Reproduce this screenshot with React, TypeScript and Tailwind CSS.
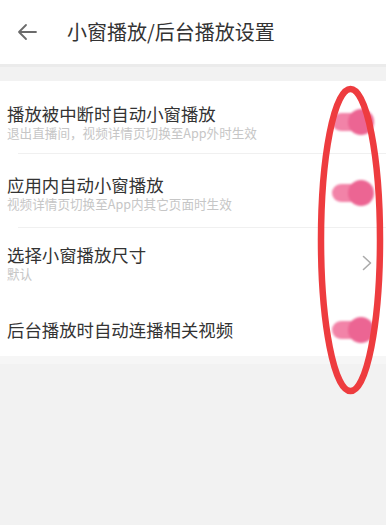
import React from 'react';

type Row = {
  title: string;
  sub?: string;
  kind: 'toggle' | 'arrow';
  pad: string;
  divider: boolean;
};

const rows: Row[] = [
  { title: '播放被中断时自动小窗播放', sub: '退出直播间，视频详情页切换至App外时生效', kind: 'toggle', pad: 'pt-[23px] pb-[13px]', divider: true },
  { title: '应用内自动小窗播放', sub: '视频详情页切换至App内其它页面时生效', kind: 'toggle', pad: 'pt-[21px] pb-[16px]', divider: true },
  { title: '选择小窗播放尺寸', sub: '默认', kind: 'arrow', pad: 'pt-[17px] pb-[21px]', divider: false },
  { title: '后台播放时自动连播相关视频', kind: 'toggle', pad: 'pt-[15px] pb-[13px]', divider: false },
];

function Toggle() {
  return (
    <div className="relative h-[26px] w-[42px] blur-[0.8px]">
      <div className="absolute left-0 top-[4px] h-[18px] w-[32px] rounded-full bg-[#f283a8]" />
      <div className="absolute right-0 top-0 h-[26px] w-[26px] rounded-full bg-[#ec6593]" />
    </div>
  );
}

function Chevron() {
  return (
    <svg width="10" height="16" viewBox="0 0 10 16" fill="none">
      <path d="M1.5 1.5L8.5 8L1.5 14.5" stroke="#ababab" strokeWidth="1.6" strokeLinecap="round" strokeLinejoin="round" />
    </svg>
  );
}

export default function App() {
  return (
    <div
      className="relative min-h-[525px] w-[386px] overflow-hidden bg-[#f2f2f2]"
      style={{ fontFamily: '"Noto Sans CJK SC", "Noto Sans", sans-serif' }}
    >
      {/* Header */}
      <div className="flex h-[64px] items-center bg-white">
        <div className="flex w-[67px] justify-start pl-[17px]">
          <svg width="20" height="18" viewBox="0 0 20 18" fill="none">
            <path d="M19 9H2M9 2L2 9l7 7" stroke="#6b6b6b" strokeWidth="1.8" strokeLinecap="round" strokeLinejoin="round" />
          </svg>
        </div>
        <span className="text-[20px] leading-none text-[#333]">小窗播放/后台播放设置</span>
      </div>
      <div className="h-[17px] border-t-[3px] border-[#ebebeb] bg-[#f2f2f2]" />

      {/* Settings list */}
      <div className="bg-white">
        {rows.map((r) => (
          <div key={r.title}>
            <div className={`flex items-center pl-[7px] pr-[12px] ${r.pad}`}>
              <div className="flex flex-1 flex-col">
                <span className="text-[17.4px] leading-[20px] text-[#333]">{r.title}</span>
                {r.sub && <span className="mt-[2px] text-[12.6px] leading-[14px] text-[#c6c6c6]">{r.sub}</span>}
              </div>
              {r.kind === 'toggle' ? (
                <Toggle />
              ) : (
                <div className="pr-[2px]">
                  <Chevron />
                </div>
              )}
            </div>
            {r.divider && <div className="ml-[18px] h-px bg-[#f0f0f0]" />}
          </div>
        ))}
      </div>
      <div className="h-[8px] bg-[#f6f6f6]" />

      {/* red annotation ellipse */}
      <svg className="pointer-events-none absolute left-0 top-0" width="386" height="525">
        <ellipse cx="350.5" cy="240" rx="29.5" ry="151" fill="none" stroke="#ee3c3f" strokeWidth="6.5" />
      </svg>
    </div>
  );
}
